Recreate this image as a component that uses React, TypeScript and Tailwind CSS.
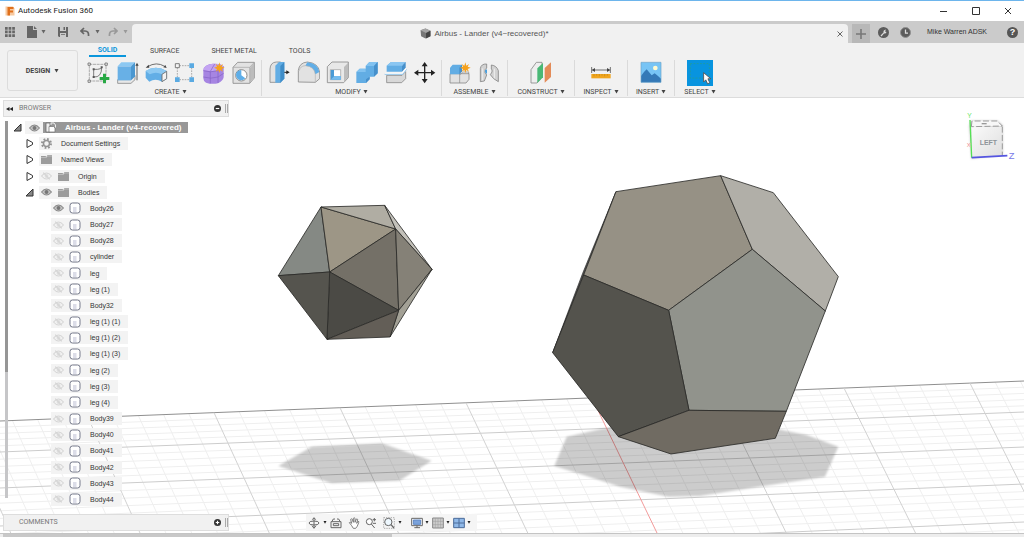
import React from "react";

type IconProps = { children: React.ReactNode; className?: string };

/* Ribbon icons share a 72-unit drawing grid. */
const Icon = ({ children, className = "h-6 w-6" }: IconProps) => (
  <svg viewBox="0 0 72 72" className={`shrink-0 ${className}`} aria-hidden="true" strokeLinejoin="round">
    {children}
  </svg>
);

const Caret = ({ className = "h-[4px] w-[5px]" }: { className?: string }) => (
  <svg viewBox="0 0 10 8" className={`shrink-0 ${className}`} aria-hidden="true">
    <path d="M1 0h8L5 7z" fill="currentColor" />
  </svg>
);

const Star = ({ x, y }: { x: number; y: number }) => (
  <path
    transform={`translate(${x} ${y})`}
    d="M0-16 3-6 11-11 7-3 16 0 7 4 11 12 3 7 0 16-3 7-11 12-7 4-16 0-7-3-11-11-3-6z"
    fill="#f5a11d"
  />
);

const SketchIcon = () => (
  <Icon>
    <path d="M10 10H60V60H10Z" fill="none" stroke="#8a8a8a" strokeWidth="2" strokeDasharray="9 2" />
    <g fill="#eee" stroke="#555" strokeWidth="2">
      <path d="M6 6h7v7H6zM57 6h7v7h-7zM6 57h7v7H6z" />
    </g>
    <path d="M23 48V25h12q12-1 13-7M23 48q24 2 24-29" fill="none" stroke="#666" strokeWidth="2.5" />
    <path d="M20 22h6v6h-6zM20 45h6v6h-6zM44 16h6v6h-6z" fill="#555" />
    <path d="M51 38h9v10h10v9H60v10h-9V57H41v-9h10z" fill="#27a844" />
  </Icon>
);
const ExtrudeIcon = () => (
  <Icon>
    <path d="M8 56h40l12-12v12L48 67H8z" fill="#e8e8e8" stroke="#8a8a8a" strokeWidth="2.5" />
    <path d="M8 16h40v42H8z" fill="#68b0e6" />
    <path d="M8 16 19 4h41L48 16z" fill="#8cc8f2" />
    <path d="M48 16 60 4v42L48 58z" fill="#4b97d0" />
    <path d="M66 58V12" stroke="#444" strokeWidth="2.5" />
    <path d="m61 14 5-9 5 9z" fill="#444" />
  </Icon>
);
const RevolveIcon = () => (
  <Icon>
    <path d="M5 30q30-20 63 0v24l-14 8q-20-12-38 0L5 50z" fill="#62aee6" />
    <path d="M5 30q30-20 63 0L54 40q-18-10-37 0z" fill="#8dc9f2" />
    <path d="M54 40 68 31v22l-14 9z" fill="#f2f2f2" stroke="#666" strokeWidth="2.5" />
    <path d="M11 17q26-16 51-1" fill="none" stroke="#555" strokeWidth="2.5" />
    <path d="m5 20 9-9 2 9zM68 21l-10-2 6-7z" fill="#444" />
  </Icon>
);
const PatternIcon = () => (
  <Icon>
    <path d="M19 14h30M13 20v30M19 56h30M56 20v30" stroke="#888" strokeWidth="2" strokeDasharray="5 3" />
    <path d="M7 8h12v12H7z" fill="#f4f4f4" stroke="#666" strokeWidth="2.5" />
    <path d="M49 7h14v14H49zM6 49h14v14H6zM49 49h14v14H49z" fill="#5aaae2" />
  </Icon>
);
const FormIcon = () => (
  <Icon>
    <path d="M4 28q0-9 8-14 10-7 25-6 23-1 28 9v32q-2 11-17 18-18 4-36-2Q4 61 4 52z" fill="#a685e2" />
    <path d="M4 28q1-16 28-20 30 0 34 10L48 28q-20 5-44 0" fill="#c3a3f2" />
    <path d="M4 29q20 7 44 0l17-12M4 48q22 7 44 0l17-11M25 32v35M48 29v37M25 31l13-22" fill="none" stroke="#8460c4" strokeWidth="2" />
    <Star x={52} y={20} />
  </Icon>
);
const HoleIcon = () => (
  <Icon>
    <path d="M6 19 20 4h50v47L56 67H6z" fill="#e2e2e2" stroke="#8a8a8a" strokeWidth="2.5" />
    <path d="M57 20 69 7v43L57 64z" fill="#bcbcbc" />
    <path d="M6 19h50v48M56 19 70 4" fill="none" stroke="#a0a0a0" strokeWidth="2" />
    <circle cx="31" cy="43" r="17" fill="#fff" stroke="#8a8a8a" strokeWidth="3" />
    <path d="M31 43V27q-16 1-16 16a16 16 0 0 0 28 9z" fill="#5eaee8" />
  </Icon>
);
const PressPullIcon = () => (
  <Icon>
    <path d="M9 64V24Q10 4 28 3h13v61z" fill="#e2e2e2" stroke="#8a8a8a" strokeWidth="2.5" />
    <path d="M25 14 36 3h16v50L40 65H25z" fill="#62ade4" />
    <path d="M40 15 52 3v50L40 65z" fill="#3f8dc8" />
    <path d="M52 34h9" stroke="#222" strokeWidth="3" />
    <path d="m58 28 10 6-10 6z" fill="#222" />
  </Icon>
);
const FilletIcon = () => (
  <Icon>
    <path d="M7 63V28Q10 5 34 3q33 3 37 30v20L58 64z" fill="#e2e2e2" stroke="#8a8a8a" strokeWidth="2.5" />
    <path d="M34 4q32 3 36 29L58 40Q55 16 28 14z" fill="#61aee7" />
    <path d="M10 29Q12 15 28 14q27 2 30 26v23" fill="none" stroke="#b0b0b0" strokeWidth="2" />
  </Icon>
);
const ShellIcon = () => (
  <Icon>
    <path d="M7 17 21 3h49v47L56 65H7z" fill="#e8e8e8" stroke="#8a8a8a" strokeWidth="2.5" />
    <path d="M57 18 69 6v43L57 62z" fill="#bcbcbc" />
    <path d="M16 26h31v30H16z" fill="#fff" stroke="#999" strokeWidth="2" />
    <path d="M17 27h10v18h20v11H17z" fill="#4b9bd5" />
    <path d="M17 56 28 45h19v11z" fill="#75bcee" />
  </Icon>
);
const CombineIcon = () => (
  <Icon>
    <path d="M7 33 17 23h18v-8L46 3h25v34L60 47H47v8L36 66H7z" fill="#62ade4" />
    <path d="M7 33 17 23h18v-8L46 3h25L60 15H35v18z" fill="#82c2f0" />
    <path d="M60 15 71 3v34L60 47zM47 47v8L36 66V55z" fill="#4790cb" />
  </Icon>
);
const SplitIcon = () => (
  <Icon>
    <path d="M11 43h46l11-12v22L56 65H11z" fill="#d8d8d8" stroke="#8a8a8a" strokeWidth="2.5" />
    <path d="M11 14 24 3h44L57 14v18H11z" fill="#62ade4" />
    <path d="M11 14 24 3h44L57 14z" fill="#8ac6f2" />
    <path d="M57 14 68 3v17L57 32z" fill="#4790cb" />
    <path d="M6 38h52l12-14" fill="none" stroke="#fff" strokeWidth="6" />
    <path d="M5 40h54l12-15" fill="none" stroke="#5fa9de" strokeWidth="2" />
  </Icon>
);
const MoveIcon = () => (
  <Icon>
    <path d="M38 10v50M13 35h50" stroke="#222" strokeWidth="4" />
    <path d="m38 3 9 13H29zM38 67l9-13H29zM6 35l13-9v18zM70 35l-13-9v18z" fill="#222" />
  </Icon>
);
const ComponentIcon = () => (
  <Icon>
    <path d="M6 38h57v17l-9 11H6z" fill="#e2e2e2" stroke="#8a8a8a" strokeWidth="2.5" />
    <path d="M35 38v28M35 42l9-9h18v6" fill="none" stroke="#8a8a8a" strokeWidth="2" />
    <path d="M6 20 14 11h28v20l-8 9H6z" fill="#62ade4" />
    <path d="m34 20 8-9v20l-8 9z" fill="#4790cb" />
    <Star x={52} y={20} />
  </Icon>
);
const JointIcon = () => (
  <Icon>
    <path d="M10 62V23Q12 8 29 9v12q-6 3-5 13l5 8-7 18z" fill="#d2d2d2" stroke="#858585" strokeWidth="2.5" />
    <path d="M43 12q16 2 21 17v33l-14-9-10-12 5-8q1-8-2-9z" fill="#d2d2d2" stroke="#858585" strokeWidth="2.5" />
    <path d="M30 25v13q-7-1-6-10z" fill="#4a9fdd" />
    <path d="M52 23v29M17 22v36" stroke="#eee" strokeWidth="3" />
  </Icon>
);
const ConstructIcon = () => (
  <Icon>
    <path d="M6 66V26L22 4h17v44L24 66z" fill="#eee" stroke="#8a8a8a" strokeWidth="2.5" />
    <path d="M25 66V22L42 6v43z" fill="#49b875" />
    <path d="M47 65V21L66 4v44z" fill="#e38b58" />
  </Icon>
);
const InspectIcon = () => (
  <Icon>
    <path d="M8 18v18M64 18v18M11 27h50" stroke="#555" strokeWidth="2.5" />
    <path d="m8 27 10-6v12zM64 27l-10-6v12z" fill="#444" />
    <path d="M7 39h58v13H7z" fill="#f0a51e" />
    <path d="M15 39v7m8-7v5m8-5v7m8-7v5m8-5v7m8-7v5" stroke="#b67a0a" strokeWidth="1.5" />
  </Icon>
);
const InsertIcon = () => (
  <Icon>
    <path d="M6 4h60v60H6z" fill="#77c4f5" />
    <circle cx="49" cy="21" r="7" fill="#fffad0" />
    <path d="M6 45 15 33l8-8 15 18 9-6 10 8 9 8v11H6z" fill="#3479b7" />
    <path d="M6 4h60v60H6z" fill="none" stroke="#6ba3c8" strokeWidth="2" />
  </Icon>
);
const SelectIcon = () => (
  <Icon className="h-[26px] w-[26px] bg-[#0894df]">
    <path d="M9 10h53v40H9z" fill="none" stroke="#2a9d8a" strokeWidth="2" strokeDasharray="5 4" />
    <path d="M46 35v26l6-6 5 11 6-3-5-11h8z" fill="#fff" stroke="#555" strokeWidth="2.5" />
  </Icon>
);

type Tool = [string, () => React.JSX.Element];
type Group = { label: string; className: string; tools: Tool[] };

const groups: Group[] = [
  {
    label: "CREATE",
    className: "pr-[6px]",
    tools: [
      ["Create Sketch", SketchIcon],
      ["Extrude", ExtrudeIcon],
      ["Revolve", RevolveIcon],
      ["Pattern", PatternIcon],
      ["Create Form", FormIcon],
      ["Hole", HoleIcon],
    ],
  },
  {
    label: "MODIFY",
    className: "px-[5px]",
    tools: [
      ["Press Pull", PressPullIcon],
      ["Fillet", FilletIcon],
      ["Shell", ShellIcon],
      ["Combine", CombineIcon],
      ["Split Body", SplitIcon],
      ["Move/Copy", MoveIcon],
    ],
  },
  {
    label: "ASSEMBLE",
    className: "px-[6px]",
    tools: [
      ["New Component", ComponentIcon],
      ["Joint", JointIcon],
    ],
  },
  { label: "CONSTRUCT", className: "w-[67px]", tools: [["Offset Plane", ConstructIcon]] },
  { label: "INSPECT", className: "w-[53px]", tools: [["Measure", InspectIcon]] },
  { label: "INSERT", className: "w-[47px]", tools: [["Insert Image", InsertIcon]] },
  { label: "SELECT", className: "w-[50px] border-r-0", tools: [["Select", SelectIcon]] },
];

const TitleBar = () => (
  <div className="flex h-[21px] items-center border-t border-[#6db5ec] bg-white pl-[5px] font-[Roboto,sans-serif]">
    <svg viewBox="0 0 20 20" className="h-[10px] w-[10px]" aria-hidden="true">
      <path d="M1 1h15l3 4v14H1z" fill="#f7c9a0" />
      <path d="M5 2h12v4H10v3h6v4h-6v6H5z" fill="#e0701c" />
    </svg>
    <h1 className="ml-[3px] text-[8px] text-[#222]">Autodesk Fusion 360</h1>
    <div className="ml-auto flex">
      <button aria-label="Minimize" className="flex w-8 justify-center">
        <svg viewBox="0 0 8 8" className="h-2 w-2" stroke="#333"><path d="M0 4.5h7" /></svg>
      </button>
      <button aria-label="Maximize" className="flex w-8 justify-center">
        <svg viewBox="0 0 8 8" className="h-2 w-2" stroke="#333" fill="none"><path d="M.5.5h7v7h-7z" /></svg>
      </button>
      <button aria-label="Close" className="flex w-8 justify-center">
        <svg viewBox="0 0 8 8" className="h-2 w-2" stroke="#333"><path d="m1 1 6 6m0-6-6 6" /></svg>
      </button>
    </div>
  </div>
);

const CubeGlyph = () => (
  <svg viewBox="0 0 20 20" className="h-[11px] w-[11px]" aria-hidden="true">
    <path d="m1 4 9-3 9 4v10l-9 4-8-4z" fill="#777" />
    <path d="m1 4 9-3 9 4-8 4z" fill="#a5a5a5" />
    <path d="m11 9 8-4v10l-8 4z" fill="#444" />
  </svg>
);

const TabBar = () => (
  <div className="flex h-[22px] bg-[#cbcbcb] text-[#666]">
    <div className="flex w-[132px] items-center pl-[5px]">
      <button aria-label="Data panel">
        <svg viewBox="0 0 10 10" className="h-[10px] w-[10px]" fill="currentColor">
          <path d="M0 0h2.7v2.7H0zM3.6 0h2.7v2.7H3.6zM7.2 0h2.7v2.7H7.2zM0 3.6h2.7v2.7H0zM3.6 3.6h2.7v2.7H3.6zM7.2 3.6h2.7v2.7H7.2zM0 7.2h2.7v2.7H0zM3.6 7.2h2.7v2.7H3.6zM7.2 7.2h2.7v2.7H7.2z" />
        </svg>
      </button>
      <button aria-label="File" className="ml-3 flex items-center gap-1">
        <svg viewBox="0 0 10 12" className="h-3 w-[10px]" fill="currentColor">
          <path d="M0 0h6v4h4v8H0zM7 0l3 3H7z" />
        </svg>
        <Caret />
      </button>
      <button aria-label="Save" className="ml-3">
        <svg viewBox="0 0 10 10" className="h-[10px] w-[10px]">
          <path d="M0 0h10v10H1L0 9z" fill="#666" />
          <path d="M2 0h6v4H2zM2 6h6v4H2z" fill="#cbcbcb" />
          <path d="M5.5 0H7v3H5.5zM3 7.2h4v.8H3z" fill="#666" />
        </svg>
      </button>
      <button aria-label="Undo" className="ml-3 flex items-center gap-[5px]">
        <svg viewBox="0 0 10 10" className="h-[10px] w-[10px]" fill="none" stroke="currentColor" strokeWidth="1.700">
          <path d="M4 1 1 4l3 3M1 4h4q4 0 3.500 5" />
        </svg>
        <Caret />
      </button>
      <button aria-label="Redo" className="ml-2 flex items-center gap-[5px] text-[#999]">
        <svg viewBox="0 0 10 10" className="h-[10px] w-[10px]" fill="none" stroke="currentColor" strokeWidth="1.700">
          <path d="m6 1 3 3-3 3M9 4H5Q1 4 1.500 9" />
        </svg>
        <Caret />
      </button>
    </div>
    <div className="mt-[3px] flex flex-1 items-center rounded-t-sm bg-[#f1f1f1]">
      <div className="flex flex-1 items-center justify-center gap-[3px] text-[8px] text-[#555]">
        <CubeGlyph />
        <span>Airbus - Lander (v4~recovered)*</span>
      </div>
      <button aria-label="Close document" className="mr-1 flex w-[7px]">
        <svg viewBox="0 0 6 6" className="h-[6px] w-[6px]" stroke="#666"><path d="m.5.5 5 5m0-5-5 5" /></svg>
      </button>
    </div>
    <div className="flex w-[176px] items-center">
      <button aria-label="New document" className="ml-1 mt-[3px] flex h-[19px] w-[18px] items-center justify-center bg-[#b8b8b8]">
        <svg viewBox="0 0 10 10" className="h-[10px] w-[10px]" stroke="#777" strokeWidth="1.600"><path d="M5 0v10M0 5h10" /></svg>
      </button>
      <button aria-label="Extensions" className="ml-2">
        <svg viewBox="0 0 22 22" className="h-[11px] w-[11px]">
          <circle cx="11" cy="11" r="11" fill="#5c5c5c" />
          <path d="m5 17 6-6q-1-5 5-6l-2 4 3 1q-1 4-5 3l-5 6z" fill="#ddd" />
        </svg>
      </button>
      <button aria-label="Job status" className="ml-[11px]">
        <svg viewBox="0 0 22 22" className="h-[11px] w-[11px]">
          <circle cx="11" cy="11" r="10" fill="#5c5c5c" stroke="#909090" strokeWidth="2" />
          <path d="M11 5v7h5" fill="none" stroke="#ddd" strokeWidth="2.500" />
        </svg>
      </button>
      <button className="ml-4 whitespace-nowrap text-[7px] text-[#333]">Mike Warren ADSK</button>
      <button aria-label="Help" className="ml-auto mr-[6px] flex h-[11px] w-[11px] items-center justify-center rounded-full bg-[#555] text-[9px] font-bold leading-none text-white">
        ?
      </button>
    </div>
  </div>
);

const Ribbon = () => (
  <div className="flex h-[55px] border-b border-[#dcdcdc] bg-[#f1f1f1] font-[Roboto,sans-serif] text-[7px] leading-[8px] text-[#444]">
    <button className="ml-[7px] mt-[7px] flex h-[41px] w-[71px] shrink-0 items-center justify-center gap-1 rounded-[3px] border border-[#dcdcdc] font-bold">
      DESIGN <Caret />
    </button>
    <div className="ml-2 flex flex-col">
      <div className="flex h-[14px] pl-[3px]">
        <button className="h-[14px] w-[37px] border-b-2 border-[#0a96dc] pt-px font-bold text-[#0a96dc]">SOLID</button>
        <button className="ml-6 pt-px">SURFACE</button>
        <button className="ml-8 pt-px">SHEET METAL</button>
        <button className="ml-8 pt-px">TOOLS</button>
      </div>
      <div className="mt-[3px] flex">
        {groups.map((g) => (
          <div key={g.label} className={`flex h-[36px] flex-col items-center border-r border-[#dadada] ${g.className}`}>
            <div className="flex h-[25px] items-center gap-[5px]">
              {g.tools.map(([name, Glyph]) => (
                <button key={name} aria-label={name}>
                  <Glyph />
                </button>
              ))}
            </div>
            <button className="mt-[3px] flex items-center gap-[2px] whitespace-nowrap">
              {g.label} <Caret />
            </button>
          </div>
        ))}
      </div>
    </div>
  </div>
);

const Eye = ({ on }: { on: boolean }) => (
  <svg viewBox="0 0 20 14" className="h-2 w-[11px]" aria-hidden="true">
    <path d="M1 7q9-11 18 0-9 11-18 0z" fill={on ? "#c4c4c4" : "none"} stroke={on ? "#8a8a8a" : "#d6d6d6"} strokeWidth="2" />
    <circle cx="10" cy="7" r="3.500" fill={on ? "#777" : "#dedede"} />
    {!on && <path d="m4 1 12 12" stroke="#d4d4d4" strokeWidth="2" />}
  </svg>
);
const Folder = () => (
  <svg viewBox="0 0 22 18" className="h-[9px] w-[11px]" aria-hidden="true">
    <path d="M0 2h9l2 2 2-4h9v18H0z" fill="#9c9c9c" />
    <path d="M0 5h11l2-3h9" fill="none" stroke="#ddd" />
  </svg>
);
const Gear = () => (
  <svg viewBox="0 0 22 22" className="h-[11px] w-[11px]" aria-hidden="true">
    <circle cx="11" cy="11" r="9" fill="none" stroke="#939393" strokeWidth="4" strokeDasharray="3.500 3.570" />
    <circle cx="11" cy="11" r="6" fill="none" stroke="#939393" strokeWidth="3" />
  </svg>
);
const Body = () => (
  <svg viewBox="0 0 24 24" className="h-3 w-3" aria-hidden="true">
    <rect x="2" y="2" width="20" height="20" rx="5" fill="#fff" stroke="#777b8c" strokeWidth="2" />
    <path d="M8 10h7v10H8z" fill="#dcdde8" />
  </svg>
);
const Assembly = () => (
  <svg viewBox="0 0 22 22" className="h-[11px] w-[11px]" aria-hidden="true">
    <path d="M2 2h8v18H2z" fill="#eee" stroke="#666" strokeWidth="1.500" />
    <path d="M8 9h9l3 3v8H8z" fill="#fff" stroke="#777" strokeWidth="1.500" />
    <path d="M12 6V2h6l3 4v5" fill="none" stroke="#eee" strokeWidth="2" />
  </svg>
);
const Toggle = ({ open, name }: { open: boolean; name: string }) => (
  <button aria-label={name} aria-expanded={open} className="flex w-4 justify-center">
    <svg viewBox="0 0 18 18" className="h-[9px] w-[9px]" stroke="#333" strokeWidth="2">
      {open ? <path d="M16 2v14H2z" fill="#888" /> : <path d="M4 1v16l11-6V7z" fill="#fff" />}
    </svg>
  </button>
);

const Slot = ({ children }: { children: React.ReactNode }) => (
  <span className="flex w-[14px] shrink-0 justify-center">{children}</span>
);

const RoundButton = ({ label, mark }: { label: string; mark: string }) => (
  <>
    <button aria-label={label} className="ml-auto">
      <svg viewBox="0 0 12 12" className="h-[7px] w-[7px]">
        <circle cx="6" cy="6" r="6" fill="#333" />
        <path d={mark} stroke="#fff" strokeWidth="2" />
      </svg>
    </button>
    <span className="ml-1 h-[9px] w-[3px] border-x border-[#aaa]" />
  </>
);

const branches = [
  { name: "Document Settings", icon: <Gear />, eye: null, open: false },
  { name: "Named Views", icon: <Folder />, eye: null, open: false },
  { name: "Origin", icon: <Folder />, eye: false, open: false },
  { name: "Bodies", icon: <Folder />, eye: true, open: true },
];

const bodies = [
  "Body26", "Body27", "Body28", "cylinder", "leg", "leg (1)", "Body32", "leg (1) (1)", "leg (1) (2)", "leg (1) (3)",
  "leg (2)", "leg (3)", "leg (4)", "Body39", "Body40", "Body41", "Body42", "Body43", "Body44",
];

const Browser = () => (
  <aside className="relative flex w-[230px] flex-1 flex-col pl-[3px] pt-[2px] text-[7px] leading-[13px] text-[#333]">
    <div className="flex h-[17px] w-[226px] items-center border border-[#ddd] bg-[#f1f1f1] text-[#777]">
      <button aria-label="Collapse browser" className="ml-[2px]">
        <svg viewBox="0 0 14 8" className="h-1 w-[7px]" fill="#222"><path d="M7 0v8L0 4zM14 0v8L7 4z" /></svg>
      </button>
      <h2 className="ml-[6px] font-[Roboto,sans-serif]">BROWSER</h2>
      <RoundButton label="Browser options" mark="M3 6h6" />
    </div>
    <div className="mt-1 flex flex-1">
      <div className="mb-[9px] ml-[2px] flex w-[3px] flex-col bg-[#c6c6c8]">
        <div className="h-2/3 bg-[#969696]" />
      </div>
      <ul className="ml-px flex flex-1 flex-col justify-between whitespace-nowrap pb-px">
        <li className="flex h-[13px] items-center">
          <Toggle open name="Airbus - Lander" />
          <button aria-label="Toggle assembly visibility" className="flex h-[13px] w-[18px] items-center justify-center bg-[#f3f3f3]">
            <Eye on />
          </button>
          <span className="flex h-[11px] items-center bg-[#989898] pr-[7px] text-[8px] font-bold text-white">
            <Slot><Assembly /></Slot>
            <span className="ml-2">Airbus - Lander (v4-recovered)</span>
          </span>
        </li>
        {branches.map((b) => (
          <li key={b.name} className="flex h-[13px] items-center pl-3">
            <Toggle open={b.open} name={b.name} />
            <span className="ml-[2px] flex h-[13px] items-center bg-[#f3f3f3] pr-2">
              {b.eye !== null && (
                <button aria-label={`Toggle ${b.name}`} className="mr-[3px] flex w-[14px] justify-center">
                  <Eye on={b.eye} />
                </button>
              )}
              <Slot>{b.icon}</Slot>
              <span className="ml-2">{b.name}</span>
            </span>
          </li>
        ))}
        {bodies.map((name, i) => (
          <li key={name} className="flex h-[13px] items-center pl-[42px]">
            <span className="flex h-[13px] items-center bg-[#f3f3f3] pr-2">
              <button aria-label={`Toggle ${name}`} className="mr-[3px] flex w-[14px] justify-center">
                <Eye on={i === 0} />
              </button>
              <Slot><Body /></Slot>
              <span className="ml-2">{name}</span>
            </span>
          </li>
        ))}
      </ul>
    </div>
  </aside>
);

/* Ground plane: major line heights at the left and right edge, five cells between majors. */
const leftY = [421, 452, 488, 526, 566];
const rightY = [381, 412, 447, 484, 522, 561];
const Grid = () => {
  const minor: React.ReactNode[] = [];
  const major: React.ReactNode[] = [];
  for (let i = 0; i < 5; i++) {
    const l0 = leftY[i];
    const l1 = leftY[i + 1] ?? l0 + 40;
    for (let k = 0; k < 5; k++) {
      const t = k / 5;
      (k === 0 ? major : minor).push(
        <line key={`h${i}-${k}`} x1={0} y1={l0 + (l1 - l0) * t} x2={1024} y2={rightY[i] + (rightY[i + 1] - rightY[i]) * t}
          stroke={i + k === 0 ? "#8f8f8f" : k === 0 ? "#cccccc" : "#efefef"} />,
      );
    }
  }
  for (let n = -10; n <= 40; n++) {
    const top = 88 + n * 25.2;
    const isMajor = n % 5 === 0;
    (isMajor ? major : minor).push(
      <line key={`v${n}`} x1={top} y1={421 - top * 0.039} x2={140 + n * 25.85} y2={533}
        stroke={n === 20 ? "#f29a9a" : isMajor ? "#d2d2d2" : "#efefef"} />,
    );
  }
  return <g strokeWidth="1">{minor}{major}</g>;
};

const icosahedron: [string, string][] = [
  ["183,51 55,257 209,246", "#858984"],
  ["183,51 209,246 407,117", "#9d9686"],
  ["183,51 374,46 407,117", "#b0ada3"],
  ["407,117 374,46 516,238", "#c3c1ba"],
  ["209,246 407,117 416,361", "#747067"],
  ["407,117 516,238 416,361", "#858177"],
  ["416,361 516,238 390,441", "#a3a196"],
  ["209,246 416,361 201,448", "#4b4a45"],
  ["55,257 209,246 201,448", "#55544e"],
  ["201,448 416,361 390,441", "#635e57"],
];
const dodecahedron: [string, string][] = [
  ["228,95 542,47 637,268 386,451 131,345", "#969185"],
  ["542,47 700,98 895,350 856,453 637,268", "#b1afa8"],
  ["637,268 856,453 739,754 447,751 386,451", "#91938c"],
  ["131,345 386,451 447,751 235,830 38,578", "#54534d"],
  ["447,751 739,754 706,835 393,882 235,830", "#706b62"],
];

const Solid = ({ faces }: { faces: [string, string][] }) => (
  <g stroke="#2a2a28" strokeWidth="2.5" strokeLinejoin="round">
    {faces.map(([points, fill]) => (
      <polygon key={points} points={points} fill={fill} />
    ))}
  </g>
);

const Viewport = () => (
  <svg viewBox="0 98 1024 435" preserveAspectRatio="xMidYMid slice" className="absolute inset-0 h-full w-full" role="img" aria-label="Model view">
    <defs>
      <filter id="soft"><feGaussianBlur stdDeviation="3" /></filter>
      <linearGradient id="cube" x1="0" y1="0" x2="1" y2="1">
        <stop offset="0" stopColor="#fafafa" />
        <stop offset="1" stopColor="#dedede" />
      </linearGradient>
    </defs>
    <Grid />
    <g transform="translate(260 190) scale(0.3333)">
      <polygon points="155,770 365,760 515,812 418,872 215,880 55,828" fill="#000" fillOpacity="0.2" filter="url(#soft)" />
      <Solid faces={icosahedron} />
    </g>
    <g transform="translate(540 160) scale(0.3333)">
      <polygon points="80,830 180,808 400,780 715,808 800,825 895,860 855,950 480,1008 385,1010 240,980 130,945 43,918" fill="#000" fillOpacity="0.2" filter="url(#soft)" />
      <polygon points="228,95 128,340 38,578 131,345" fill="#555" stroke="#2a2a28" strokeWidth="2" />
      <Solid faces={dodecahedron} />
    </g>
    <g transform="translate(940 100) scale(0.3333)">
      <path d="M88 78 92 62h80l16 14v88l-94 12z" fill="#ccc" filter="url(#soft)" />
      <path d="M94 80h93v86l-93 7z" fill="url(#cube)" />
      <path d="m94 80 2-17h76l15 15z" fill="#f7f7f7" />
      <path d="m94 80 2-17h76l15 15zM187 80v86" fill="none" stroke="#8c8c8c" strokeWidth="2.500" strokeDasharray="18 7" />
      <path d="M125 71h15" stroke="#999" strokeWidth="4" />
      <path d="M90 60 95 173" stroke="#55e055" strokeWidth="4" />
      <path d="m95 173 107-6" stroke="#5555e0" strokeWidth="5" />
      <g fontFamily="Liberation Sans, sans-serif">
        <text x="119" y="136" fontSize="21" fontWeight="bold" fill="#8e9499">LEFT</text>
        <text x="82" y="53" fontSize="20" fill="#67e667">Y</text>
        <text x="80" y="140" fontSize="18" fill="#f09090">X</text>
        <text x="206" y="177" fontSize="28" fill="#7777e8">Z</text>
      </g>
    </g>
  </svg>
);

const NavIcon = ({ children }: { children: React.ReactNode }) => (
  <svg viewBox="0 0 36 36" className="h-3 w-3" fill="none" stroke="#666" strokeWidth="3" aria-hidden="true">
    {children}
  </svg>
);

const NavBar = () => (
  <nav aria-label="Navigation" className="ml-[77px] flex h-[17px] w-[171px] items-center bg-[#f5f5f5] pl-[2px] text-[#222]">
    <button aria-label="Orbit" className="flex items-center gap-[3px]">
      <NavIcon><ellipse cx="18" cy="18" rx="15" ry="6" /><path d="M18 3v30m-6-7 6 8 6-8M13 8l5-6 5 6" /></NavIcon>
      <Caret className="h-[3px] w-1" />
    </button>
    <button aria-label="Look at" className="ml-[3px]">
      <NavIcon><path d="M3 14h30v18H3zM6 13l4-7h5m6 0h5l4 7M10 20h16v6H10z" /></NavIcon>
    </button>
    <button aria-label="Pan" className="ml-[6px]">
      <NavIcon><path d="M11 26 4 17q2-4 7 2L8 7q3-3 5 0l3 9V4q3-3 5 0v12l4-10q4-1 4 2l-3 11 4-6q4 0 2 4-4 13-9 17H16z" strokeWidth="2.500" fill="#fff" /></NavIcon>
    </button>
    <button aria-label="Zoom" className="ml-[5px]">
      <NavIcon><circle cx="13" cy="14" r="9" fill="#fff" /><path d="m19 21 10 12M28 3v10m-5-5h10M24 19h9" /></NavIcon>
    </button>
    <button aria-label="Fit" className="ml-[6px] flex items-center gap-[3px]">
      <NavIcon><path d="M2 2h32v32H2z" strokeWidth="1.500" strokeDasharray="4 3" /><circle cx="16" cy="15" r="11" fill="#eef8ff" /><path d="m24 23 9 10" strokeWidth="4" /></NavIcon>
      <Caret className="h-[3px] w-1" />
    </button>
    <button aria-label="Display settings" className="ml-[9px] flex items-center gap-[2px]">
      <NavIcon><path d="M2 4h32v22H2z" fill="#fff" /><path d="M7 9h22v13H7z" fill="#7ba3dc" stroke="#6088c4" /><path d="M10 32h17M18 26v6" /></NavIcon>
      <Caret className="h-[3px] w-1" />
    </button>
    <button aria-label="Grid and snaps" className="ml-[3px] flex items-center gap-[2px]">
      <NavIcon><path d="M2 3h32v30H2z" fill="#ccc" stroke="#888" /><path d="M10 3v30m8-30v30m8-30v30M2 13h32M2 23h32" strokeWidth="1.500" stroke="#999" /></NavIcon>
      <Caret className="h-[3px] w-1" />
    </button>
    <button aria-label="Viewports" className="ml-[3px] flex items-center gap-[2px]">
      <NavIcon><path d="M2 4h32v28H2zM18 4v28M2 18h32" fill="#8fb8e8" stroke="#4c6c9a" /></NavIcon>
      <Caret className="h-[3px] w-1" />
    </button>
  </nav>
);

export default function App() {
  return (
    <div className="flex min-h-screen flex-col bg-white font-['Liberation_Sans',Arial,sans-serif] text-[#333]">
      <header>
        <TitleBar />
        <TabBar />
        <Ribbon />
      </header>
      <main className="relative flex flex-1 flex-col overflow-hidden">
        <Viewport />
        <Browser />
        <div className="relative flex items-center pb-[2px] pl-[3px] pt-[7px]">
          <section className="flex h-[17px] w-[226px] items-center border border-[#ddd] bg-[#f1f1f1] text-[#777]">
            <h2 className="ml-[15px] font-[Roboto,sans-serif] text-[7px]">COMMENTS</h2>
            <RoundButton label="Add comment" mark="M3 6h6M6 3v6" />
          </section>
          <NavBar />
        </div>
      </main>
      <footer className="flex h-1 border-t border-[#c4c4c4] bg-[#ededed]">
        <div className="ml-[3px] w-[38%] bg-[#c8c8c8]" />
      </footer>
    </div>
  );
}
